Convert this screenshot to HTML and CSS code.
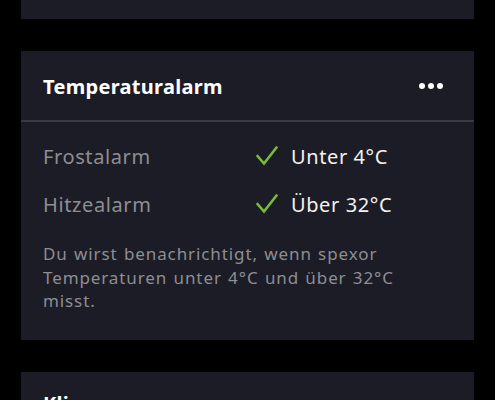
FILE: index.html
```html
<!DOCTYPE html>
<html lang="de">
<head>
<meta charset="utf-8">
<link rel="stylesheet" href="styles.css">
</head>
<body>
<div class="page">
  <div class="card card-top"></div>
  <section class="card">
    <header class="card-head">
      <h2 class="title">Temperaturalarm</h2>
      <div class="more"><span></span><span></span><span></span></div>
    </header>
    <div class="rows">
      <div class="row">
        <span class="label">Frostalarm</span>
        <span class="value"><svg class="check" viewBox="0 0 22 20"><path d="M1.5 10 L8 17.5 L20.5 1.5" fill="none" stroke="#7cbb3a" stroke-width="2.6" stroke-linecap="round" stroke-linejoin="miter"/></svg>Unter 4°C</span>
      </div>
      <div class="row">
        <span class="label">Hitzealarm</span>
        <span class="value"><svg class="check" viewBox="0 0 22 20"><path d="M1.5 10 L8 17.5 L20.5 1.5" fill="none" stroke="#7cbb3a" stroke-width="2.6" stroke-linecap="round" stroke-linejoin="miter"/></svg>Über 32°C</span>
      </div>
    </div>
    <p class="desc">Du wirst benachrichtigt, wenn spexor Temperaturen unter 4°C und über 32°C misst.</p>
  </section>
  <section class="card card-next">
    <h2 class="title">Klima</h2>
  </section>
</div>
</body>
</html>
```
FILE: styles.css
```css
html, body {
  margin: 0;
  padding: 0;
  background: #000;
  height: 400px;
  overflow: hidden;
}
.page {
  padding: 0 21px;
  font-family: "Noto Sans", sans-serif;
  display: flex;
  flex-direction: column;
  gap: 32px;
}
.card {
  background: #1c1c26;
}
.card-top {
  height: 19px;
}
.card-head {
  height: 69px;
  display: flex;
  align-items: center;
  justify-content: space-between;
  padding: 0 31px 0 22px;
  border-bottom: 2px solid #383943;
}
.title {
  margin: 0;
  color: #fff;
  font-size: 20px;
  line-height: 20px;
  font-weight: 700;
  letter-spacing: 0.3px;
}
.card-head .title {
  padding-top: 3px;
}
.more {
  display: flex;
  gap: 3px;
}
.more span {
  width: 6px;
  height: 6px;
  border-radius: 50%;
  background: #fff;
}
.rows {
  padding: 10px 22px 0;
}
.row {
  height: 48px;
  display: flex;
  align-items: center;
  font-size: 20px;
  letter-spacing: 0.6px;
}
.label {
  width: 213px;
  color: #8d8e93;
}
.value {
  display: flex;
  align-items: center;
  color: #f2f2f2;
}
.check {
  width: 22px;
  height: 20px;
  margin-right: 13px;
  flex: none;
}
.desc {
  margin: 0;
  padding: 14px 22px 0;
  height: 112px;
  box-sizing: border-box;
  color: #8d8e93;
  font-size: 17px;
  line-height: 23.5px;
  letter-spacing: 0.9px;
  word-spacing: 1px;
}
.card-next {
  height: 60px;
  padding: 22px 22px 0;
  box-sizing: border-box;
}
```
